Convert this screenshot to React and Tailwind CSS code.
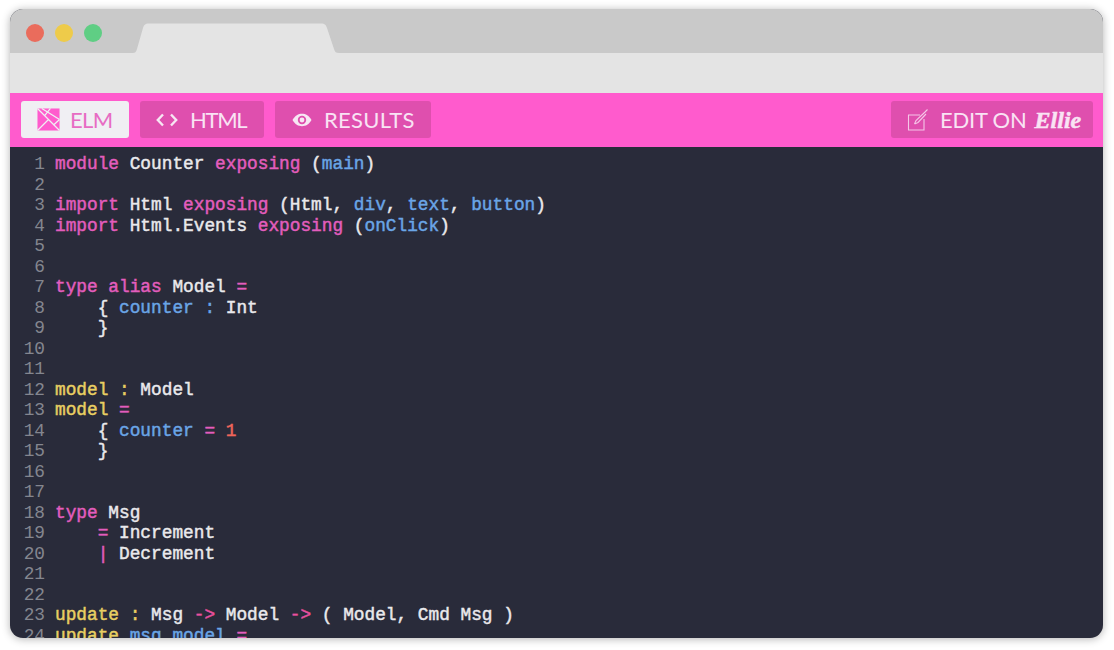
import React from 'react';

const W = 'text-[#e9e9ec]';
const K = 'text-[#e35dbd]';
const B = 'text-[#6aa5e6]';
const Y = 'text-[#e8cf62]';
const R = 'text-[#f0655a]';
const A = 'text-[#e9509f]';

// each line is a list of [text, colour] pairs
const lines = [
  [['module', K], [' Counter ', W], ['exposing', K], [' (', W], ['main', B], [')', W]],
  [],
  [['import', K], [' Html ', W], ['exposing', K], [' (Html, ', W], ['div', B], [', ', W], ['text', B], [', ', W], ['button', B], [')', W]],
  [['import', K], [' Html.Events ', W], ['exposing', K], [' (', W], ['onClick', B], [')', W]],
  [],
  [],
  [['type alias', K], [' Model ', W], ['=', K]],
  [['    { ', W], ['counter :', B], [' Int', W]],
  [['    }', W]],
  [],
  [],
  [['model :', Y], [' Model', W]],
  [['model', Y], [' ', W], ['=', K]],
  [['    { ', W], ['counter', B], [' ', W], ['=', K], [' ', W], ['1', R]],
  [['    }', W]],
  [],
  [],
  [['type', K], [' Msg', W]],
  [['    ', W], ['=', K], [' Increment', W]],
  [['    ', W], ['|', K], [' Decrement', W]],
  [],
  [],
  [['update :', Y], [' Msg ', W], ['->', A], [' Model ', W], ['->', A], [' ( Model, Cmd Msg )', W]],
  [['update', Y], [' ', W], ['msg model', B], [' ', W], ['=', K]],
];

function ElmIcon() {
  return (
    <svg viewBox="0 0 24 24" className="w-[23px] h-[23px]">
      <rect x="0.5" y="0.5" width="23" height="23" fill="#ff5bcd" />
      <path d="M0.5 0.5L23.5 23.5M0.5 23.5L12 12M5 0.5L23.5 12M14 0.5L8 8M23.5 12L17 18" stroke="#f0eff3" strokeWidth="1.3" fill="none" />
    </svg>
  );
}

function CodeIcon() {
  return (
    <svg viewBox="0 0 22 14" className="w-[22px] h-[14px]" fill="none" stroke="#f7e6f3" strokeWidth="2.4">
      <path d="M7 1.5L1.8 7L7 12.5M15 1.5L20.2 7L15 12.5" />
    </svg>
  );
}

function EyeIcon() {
  return (
    <svg viewBox="0 0 20 14" className="w-[20px] h-[14px]">
      <path d="M0.5 7C3 2.6 6.3 0.8 10 0.8S17 2.6 19.5 7C17 11.4 13.7 13.2 10 13.2S3 11.4 0.5 7Z" fill="#f7e6f3" />
      <circle cx="10" cy="7" r="4.2" fill="#df4fae" />
      <circle cx="10" cy="7" r="2.4" fill="#f7e6f3" />
    </svg>
  );
}

function EditIcon() {
  return (
    <svg viewBox="0 0 22 22" className="w-[22px] h-[22px]" fill="none" stroke="#f5c6e8" strokeWidth="1.1">
      <path d="M13 6H1.5V21H17V10" />
      <path d="M7.5 15L9 11.5L18 3L20.5 0.5M7.5 15L11 13.5L19 5" />
    </svg>
  );
}

function TabButton({ icon, children, className }) {
  return (
    <div className={`h-[37px] rounded-[3px] flex items-center bg-[#df4fae] text-[#f9e3f4] text-[22px] ${className}`}>
      {icon}
      {children}
    </div>
  );
}

export default function App() {
  return (
    <div className="w-[1114px] h-[650px] bg-white pt-[9px] pl-[10px] overflow-hidden" style={{ fontFamily: 'Lato, sans-serif' }}>
      <div className="w-[1093px] h-[629px] rounded-[13px] overflow-hidden shadow-[0_1px_8px_rgba(0,0,0,0.3)] flex flex-col bg-[#292b3a]">
        <div className="h-[44px] bg-[#c9c9c9] flex items-start shrink-0">
          <div className="flex gap-[11px] pl-[16px] pt-[15px]">
            <div className="w-[18px] h-[18px] rounded-full bg-[#ea6c5c]" />
            <div className="w-[18px] h-[18px] rounded-full bg-[#eecb4a]" />
            <div className="w-[18px] h-[18px] rounded-full bg-[#5fce84]" />
          </div>
          <svg viewBox="0 0 206 30" className="w-[206px] h-[30px] mt-[14px] ml-[31px]">
            <path d="M0 30C2 30 3 29 4 26L10 5C11 2 12 0.5 16 0.5H188C192 0.5 193 2 194 5L201 26C202 29 203 30 206 30Z" fill="#e4e4e4" />
          </svg>
        </div>
        <div className="h-[40px] bg-[#e4e4e4] shrink-0" />
        <div className="h-[54px] bg-[#ff5bcd] flex items-start pt-[8px] pl-[11px] pr-[10px] gap-[11px] shrink-0">
          <div className="w-[108px] h-[37px] rounded-[3px] flex items-center bg-[#f0eff3] text-[#e76cc3] text-[22px] pl-[16px] gap-[10px]">
            <ElmIcon />
            <span className="tracking-[-0.6px]">ELM</span>
          </div>
          <TabButton icon={<CodeIcon />} className="w-[124px] pl-[16px] gap-[12px]">
            <span className="tracking-[-1.3px]">HTML</span>
          </TabButton>
          <TabButton icon={<EyeIcon />} className="w-[156px] pl-[17px] gap-[12px]">
            <span className="tracking-[0.3px]">RESULTS</span>
          </TabButton>
          <TabButton icon={<EditIcon />} className="w-[202px] pl-[16px] gap-[11px] ml-auto">
            <span className="tracking-[-0.2px]">EDIT ON</span>
            <span className="-ml-[3px] text-[24px] font-bold italic [-webkit-text-stroke:0.5px]" style={{ fontFamily: '"Liberation Serif", serif' }}>Ellie</span>
          </TabButton>
        </div>
        <div className="flex-1 overflow-hidden pt-[7px] text-[17.8px] leading-[20.5px] whitespace-pre [-webkit-text-stroke:0.45px]" style={{ fontFamily: '"Liberation Mono", monospace' }}>
          {lines.map((line, i) => (
            <div key={i} className="flex h-[20.5px]">
              <span className="w-[35px] text-right text-[#84868f] [-webkit-text-stroke:0px] shrink-0">{i + 1}</span>
              <span className="ml-[10px]">
                {line.map(([text, color], j) => (
                  <span key={j} className={color}>{text}</span>
                ))}
              </span>
            </div>
          ))}
        </div>
      </div>
    </div>
  );
}
